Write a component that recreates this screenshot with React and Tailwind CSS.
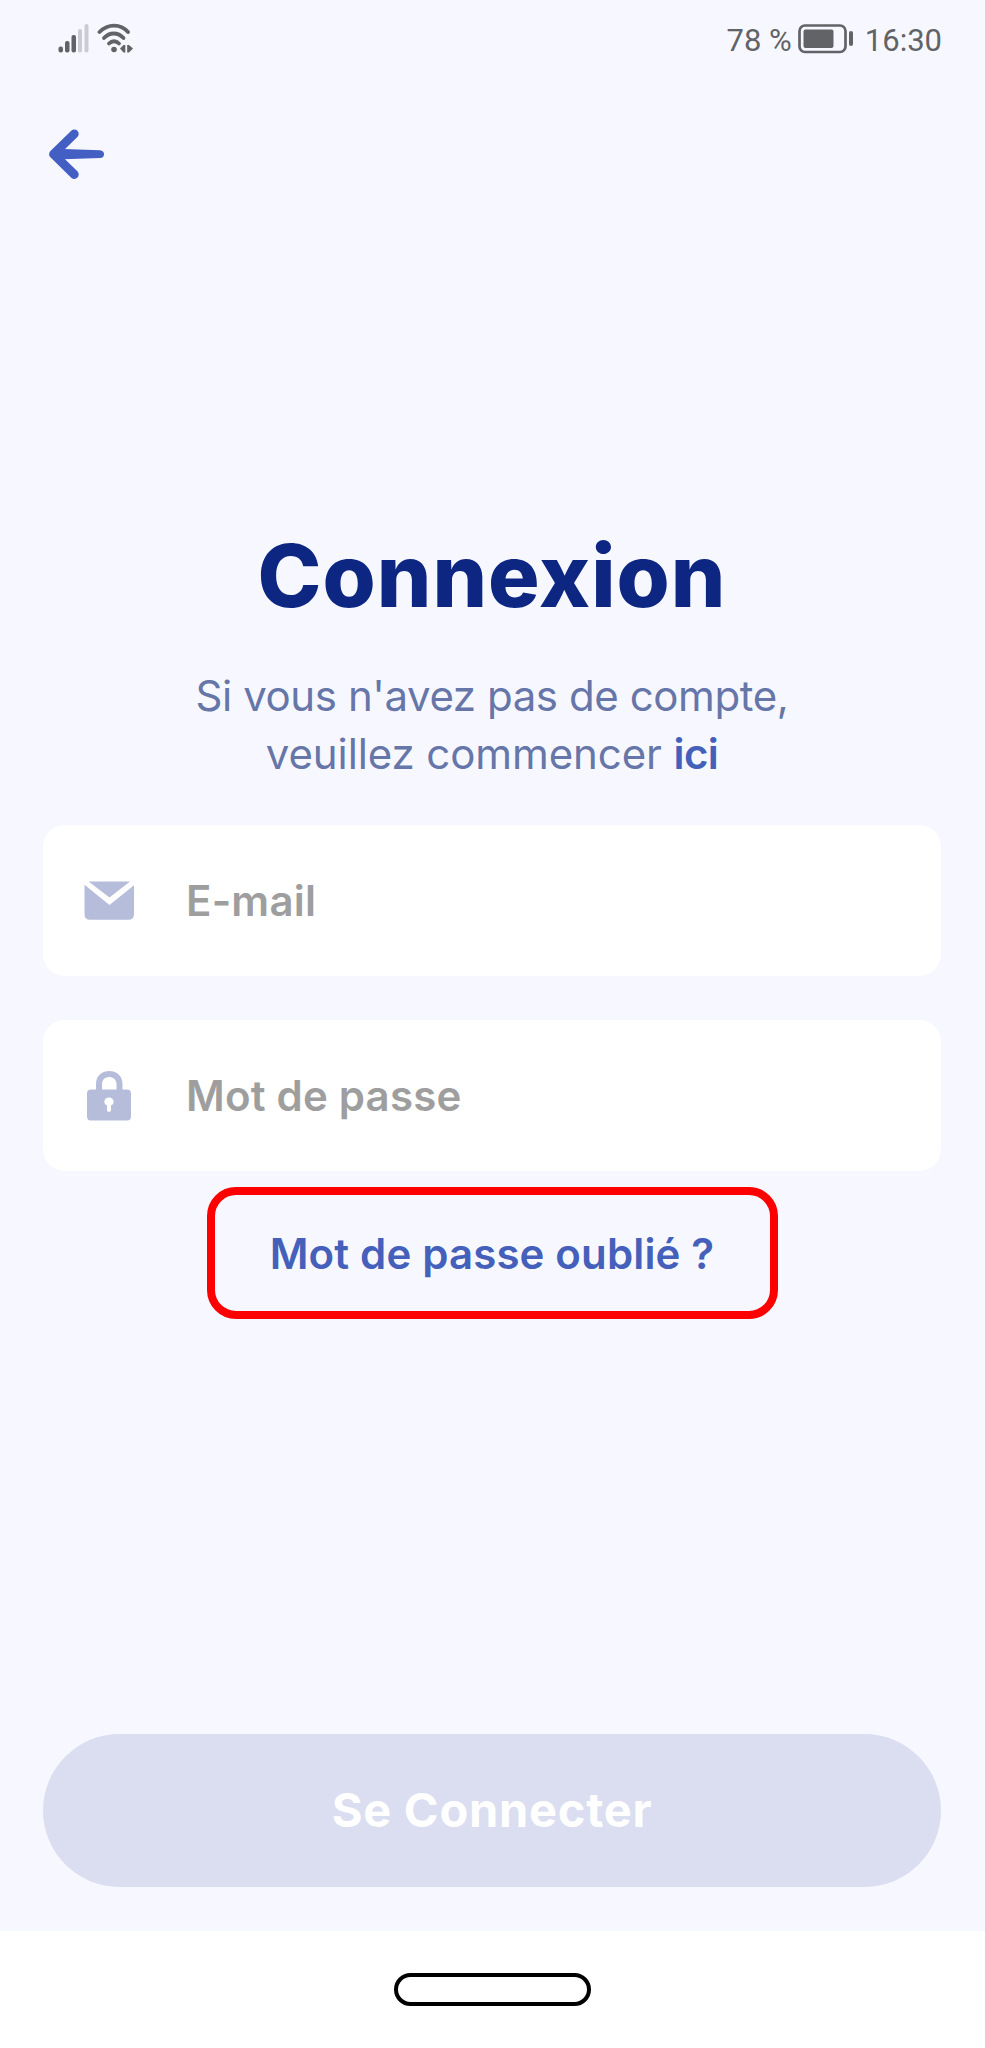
const FIELDS = [
  { type: "email", label: "E-mail", Icon: MailIcon },
  { type: "password", label: "Mot de passe", Icon: LockIcon },
];

export default function App() {
  return (
    <div className="flex flex-col w-[985px] h-[2048px] overflow-hidden bg-[#f7f8ff] font-['Inter',sans-serif]">
      <StatusBar />

      <header className="h-[112px] pt-[47px] pl-[48px]">
        <button type="button" aria-label="Retour" className="block">
          <BackArrow />
        </button>
      </header>

      <main className="flex flex-col items-center flex-1 pl-[43px] pr-[44px]">
        <h1 className="mt-[334px] h-[100px] leading-[100px] text-[86px] font-extrabold tracking-[1px] text-[#0d2682] whitespace-nowrap">
          Connexion
        </h1>

        <div className="mt-[41px] text-center text-[42px] leading-[58px] text-[#6676a8] whitespace-nowrap">
          <p className="tracking-[-0.42px]">Si vous n'avez pas de compte,</p>
          <p className="tracking-[-0.1px]">
            veuillez commencer{" "}
            <a className="font-semibold tracking-[-0.6px] text-[#4560bb]">ici</a>
          </p>
        </div>

        <form className="flex flex-col w-full mt-[42px] gap-[44px]">
          {FIELDS.map((field) => (
            <Field key={field.type} {...field} />
          ))}
        </form>

        <a className="flex items-center justify-center mt-[16px] w-[571px] h-[132px] rounded-[29px] border-8 border-[#ff0000] text-[42px] font-semibold tracking-[0.15px] text-[#4560bb] whitespace-nowrap">
          Mot de passe oublié ?
        </a>

        <button
          type="button"
          className="w-full h-[153px] mt-auto mb-[44px] rounded-full bg-[#dadef0] text-[47px] font-bold tracking-[0.75px] text-white"
        >
          Se Connecter
        </button>
      </main>

      <nav className="flex justify-center h-[117px] pt-[42px] bg-white">
        <div className="w-[197px] h-[33px] rounded-full border-4 border-black" />
      </nav>
    </div>
  );
}

function StatusBar() {
  return (
    <div className="flex items-start justify-between h-[80px] pt-[22px] pl-[58px] pr-[43px] text-[#626366] font-['Roboto',sans-serif]">
      <div className="flex">
        <SignalIcon />
        <WifiIcon />
      </div>
      <div className="flex text-[31px] leading-[38px]">
        <span>78 %</span>
        <BatteryIcon />
        <span>16:30</span>
      </div>
    </div>
  );
}

function Field({ type, label, Icon }) {
  return (
    <label className="flex items-center w-full h-[151px] rounded-[22px] bg-white">
      <span className="flex justify-center w-[131px]">
        <Icon />
      </span>
      <input
        type={type}
        placeholder={label}
        className="w-[600px] ml-[12px] text-[42px] font-semibold tracking-[0.2px] outline-none placeholder:text-[#9e9e9e]"
      />
    </label>
  );
}

function BackArrow() {
  return (
    <svg width="57" height="54" viewBox="0 0 57 54" fill="#435fc4">
      <path
        d="M26.300 6.800 L5.500 27.200 L26.300 47.500"
        fill="none"
        stroke="#435fc4"
        strokeWidth="8.800"
        strokeLinecap="round"
        strokeLinejoin="round"
      />
      <path d="M6 27 L16 22 L52 23.300 Q56 23.800 56 27.200 Q56 30.600 52 31 L16 32.200Z" />
    </svg>
  );
}

function SignalIcon() {
  return (
    <svg width="32" height="32" viewBox="0 0 32 32" fill="currentColor">
      <rect x="0.500" y="24.500" width="4.500" height="6" rx="2" />
      <rect x="7" y="19" width="4.500" height="11.500" rx="2" />
      <rect x="13.500" y="13" width="4.500" height="17.500" rx="2" />
      <rect x="20" y="7" width="4" height="23.500" rx="2" fill="#cbccd1" />
      <rect x="26.500" y="2" width="4" height="28.500" rx="2" fill="#cbccd1" />
    </svg>
  );
}

function WifiIcon() {
  return (
    <svg
      width="36"
      height="32"
      viewBox="0 0 36 32"
      className="ml-[7px]"
      fill="none"
      stroke="currentColor"
      strokeWidth="3.800"
      strokeLinecap="round"
    >
      <path d="M2.500 10 C11 1.500 23.500 1.500 31 10" />
      <path d="M7 16 C12.500 10 21 10 26.500 16" />
      <path d="M12 21.500 C15 18.500 19 18.500 22 21.500" />
      <circle cx="17" cy="27.500" r="2.800" fill="currentColor" stroke="none" />
      <g fill="currentColor" stroke="none">
        <path d="M23 26.500 L26.500 23 H28.300 V30.500 H26.500Z" />
        <path d="M36 26.500 L32 23 H30.200 V30.500 H32Z" />
      </g>
    </svg>
  );
}

function BatteryIcon() {
  return (
    <svg width="56" height="30" viewBox="0 0 56 30" className="mt-[2px] ml-[6px] mr-[11px]">
      <rect x="1.500" y="1.500" width="46" height="26.500" rx="5.500" fill="none" stroke="currentColor" strokeWidth="2.700" />
      <rect x="5.500" y="5.500" width="30" height="18.500" rx="2" fill="currentColor" />
      <rect x="51" y="7" width="4" height="15" rx="2" fill="currentColor" />
    </svg>
  );
}

function MailIcon() {
  return (
    <svg width="50" height="39" viewBox="0 0 50 39" fill="#b5bddb">
      <path d="M4.500 0.500 H46 L25.500 16.500Z" />
      <path d="M0.500 3.800 L25.500 24 L50 4.300 V33 Q50 38.800 44.500 38.800 H6 Q0.500 38.800 0.500 33Z" />
    </svg>
  );
}

function LockIcon() {
  return (
    <svg width="44" height="50" viewBox="0 0 44 50" fill="#b5bddb">
      <path
        fillRule="evenodd"
        d="M9 18.500 V13 C9 -4.300 35.500 -4.300 35.500 13 V18.500 H40 Q44 18.500 44 22.500 V45.500 Q44 49.500 40 49.500 H4 Q0 49.500 0 45.500 V22.500 Q0 18.500 4 18.500Z M15 18.500 H29.500 V13 C29.500 3.500 15 3.500 15 13Z M20 34.500 V39.500 Q22 42.500 24 39.500 V34.500 C28.500 32.500 27 26.500 22 26.500 C17 26.500 15.500 32.500 20 34.500Z"
      />
    </svg>
  );
}
